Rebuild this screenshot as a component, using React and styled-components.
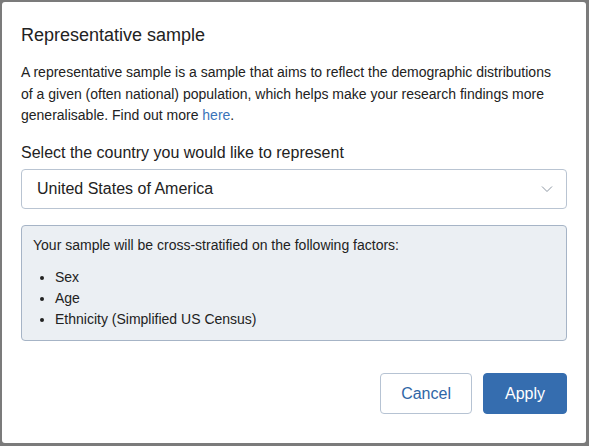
import styled, { createGlobalStyle } from "styled-components"

const GlobalStyle = createGlobalStyle`
  html, body {
    margin: 0;
    padding: 0;
    background: #7b7b7b;
    font-family: "Liberation Sans", Arial, sans-serif;
    color: #222;
  }
`

const Overlay = styled.div`
  height: 446px;
  padding: 2px 3px 3px 2px;
  box-sizing: border-box;
  display: flex;
`

const Modal = styled.div`
  flex: 1;
  background: #fff;
  border-radius: 3px;
  padding: 22px 19px 29px 19px;
  display: flex;
  flex-direction: column;
  box-sizing: border-box;
`

const Title = styled.h2`
  margin: 0;
  font-size: 18px;
  font-weight: normal;
  line-height: 22px;
  color: #222;
`

const Intro = styled.p`
  margin: 16px 0 0;
  max-width: 540px;
  font-size: 14px;
  line-height: 21.5px;
  color: #222;

  a {
    color: #3b74b9;
    text-decoration: none;
  }
`

const Label = styled.div`
  margin-top: 15px;
  font-size: 16px;
  line-height: 22px;
  color: #222;
`

const Select = styled.div`
  margin-top: 5px;
  height: 40px;
  box-sizing: border-box;
  border: 1px solid #b9c4d2;
  border-radius: 4px;
  padding: 0 13px 0 15px;
  display: flex;
  align-items: center;
  justify-content: space-between;
  font-size: 16px;
  color: #222;
`

const InfoBox = styled.div`
  margin-top: 16px;
  background: #ebeff3;
  border: 1px solid #a6b4c6;
  border-radius: 4px;
  padding: 10px 11px 10px;
  font-size: 14px;
  color: #222;
`

const InfoText = styled.div`
  line-height: 19px;
`

const FactorList = styled.ul`
  margin: 12px 0 0;
  padding: 0 0 0 22px;
  list-style: disc;

  li {
    line-height: 21px;
    padding-left: 0;
  }
`

const Footer = styled.div`
  margin-top: auto;
  display: flex;
  justify-content: flex-end;
  gap: 11px;
`

const Button = styled.button`
  height: 41px;
  padding: 0 ${(p) => (p.$primary ? "21px" : "20px")};
  border-radius: 4px;
  font-family: inherit;
  font-size: 16px;
  border: 1px solid ${(p) => (p.$primary ? "#356daf" : "#b6c3d3")};
  background: ${(p) => (p.$primary ? "#356daf" : "#fff")};
  color: ${(p) => (p.$primary ? "#fff" : "#2f66a6")};
  cursor: pointer;
`

const Chevron = () => (
  <svg width="12" height="8" viewBox="0 0 12 8" fill="none">
    <path d="M1 1.5L6 6.5L11 1.5" stroke="#8d97a3" strokeWidth="1" />
  </svg>
)

const App = () => {
  return (
    <>
      <GlobalStyle />
      <Overlay>
        <Modal>
          <Title>Representative sample</Title>
          <Intro>
            A representative sample is a sample that aims to reflect the demographic distributions
            of a given (often national) population, which helps make your research findings more
            generalisable. Find out more <a href="#">here</a>.
          </Intro>
          <Label>Select the country you would like to represent</Label>
          <Select>
            <span>United States of America</span>
            <Chevron />
          </Select>
          <InfoBox>
            <InfoText>Your sample will be cross-stratified on the following factors:</InfoText>
            <FactorList>
              <li>Sex</li>
              <li>Age</li>
              <li>Ethnicity (Simplified US Census)</li>
            </FactorList>
          </InfoBox>
          <Footer>
            <Button>Cancel</Button>
            <Button $primary>Apply</Button>
          </Footer>
        </Modal>
      </Overlay>
    </>
  )
}

export default App
